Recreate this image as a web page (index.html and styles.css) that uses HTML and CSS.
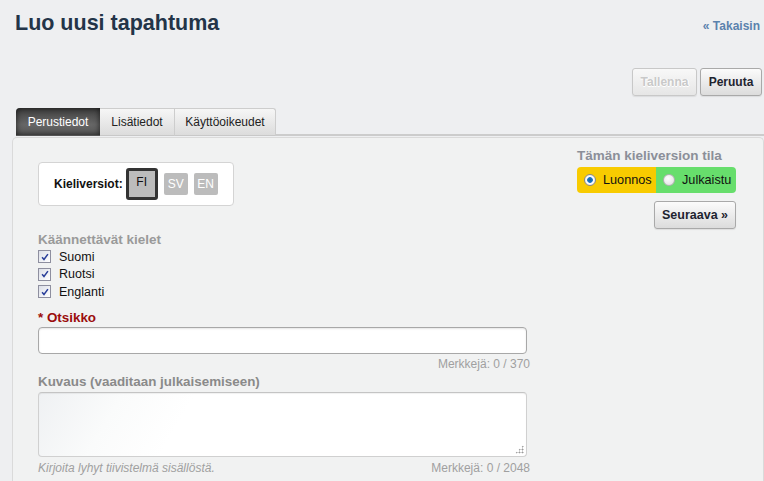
FILE: index.html
```html
<!DOCTYPE html>
<html lang="fi">
<head>
<meta charset="utf-8">
<title>Luo uusi tapahtuma</title>
<link rel="stylesheet" href="styles.css">
</head>
<body>
<header class="page-header">
  <h1 class="title">Luo uusi tapahtuma</h1>
  <a class="back-link" href="#">« Takaisin</a>
</header>
<div class="toolbar">
  <button class="btn btn-disabled" disabled>Tallenna</button>
  <button class="btn">Peruuta</button>
</div>
<nav class="tabs">
  <a class="tab tab-active" href="#">Perustiedot</a>
  <a class="tab" href="#">Lisätiedot</a>
  <a class="tab" href="#">Käyttöoikeudet</a>
  <span class="tab-fill"></span>
</nav>
<section class="panel">
  <div class="main-col">
    <div class="lang-box">
      <span class="lang-label">Kieliversiot:</span>
      <span class="lang lang-current">FI</span>
      <span class="lang">SV</span>
      <span class="lang">EN</span>
    </div>
    <h3 class="sub-heading">Käännettävät kielet</h3>
    <ul class="check-list">
      <li class="check-row"><span class="checkbox"><svg viewBox="0 0 12 12" width="10" height="10"><path d="M2.5 6.2 L4.8 9 L9.5 2.5" fill="none" stroke="#2a3f9a" stroke-width="1.8"/></svg></span>Suomi</li>
      <li class="check-row"><span class="checkbox"><svg viewBox="0 0 12 12" width="10" height="10"><path d="M2.5 6.2 L4.8 9 L9.5 2.5" fill="none" stroke="#2a3f9a" stroke-width="1.8"/></svg></span>Ruotsi</li>
      <li class="check-row"><span class="checkbox"><svg viewBox="0 0 12 12" width="10" height="10"><path d="M2.5 6.2 L4.8 9 L9.5 2.5" fill="none" stroke="#2a3f9a" stroke-width="1.8"/></svg></span>Englanti</li>
    </ul>
    <label class="field-label required">* Otsikko</label>
    <input class="text-input" type="text">
    <div class="counter">Merkkejä: 0 / 370</div>
    <label class="field-label muted">Kuvaus (vaaditaan julkaisemiseen)</label>
    <div class="area-wrap">
      <textarea class="text-area"></textarea>
      <span class="grip"></span>
    </div>
    <div class="hint-row">
      <span class="hint">Kirjoita lyhyt tiivistelmä sisällöstä.</span>
      <span class="counter-inline">Merkkejä: 0 / 2048</span>
    </div>
  </div>
  <aside class="side-col">
    <h3 class="side-heading">Tämän kieliversion tila</h3>
    <div class="status">
      <span class="status-opt status-draft"><span class="radio radio-on"></span>Luonnos</span>
      <span class="status-opt status-pub"><span class="radio"></span>Julkaistu</span>
    </div>
    <button class="btn btn-next">Seuraava »</button>
  </aside>
</section>
</body>
</html>
```
FILE: styles.css
```css
* { box-sizing: border-box; }
html, body { margin: 0; padding: 0; }
body {
  background: #eeeff1;
  font-family: "Liberation Sans", Arial, sans-serif;
  font-size: 12px;
  color: #222;
  width: 764px;
  height: 481px;
  overflow: hidden;
}
.page-header {
  display: flex;
  justify-content: space-between;
  align-items: flex-start;
  padding: 10px 4px 0 15px;
}
.title {
  margin: 0;
  font-size: 21.5px;
  line-height: 26px;
  font-weight: bold;
  color: #233448;
}
.back-link {
  margin-top: 9px;
  font-size: 12px;
  font-weight: bold;
  color: #5b82ad;
  text-decoration: none;
}
.toolbar {
  display: flex;
  justify-content: flex-end;
  gap: 3px;
  padding: 32px 2px 0 0;
}
.btn {
  height: 28px;
  padding: 0 7px;
  border: 1px solid #a9a9a9;
  border-radius: 3px;
  background: linear-gradient(#fbfbfb, #dcdcdc);
  font-family: "Liberation Sans", Arial, sans-serif;
  font-size: 12px;
  font-weight: bold;
  color: #1e2430;
  white-space: nowrap;
  box-shadow: 0 1px 1px rgba(0,0,0,0.08);
}
.btn-disabled {
  width: 65px;
  color: #c9c9c9;
  border-color: #c8c8c8;
  text-shadow: 0 1px 0 #fff, 1px 0 0 #fff;
  background: linear-gradient(#f8f8f8, #e6e6e6);
}
.toolbar .btn:last-child { width: 62px; }
.tabs {
  display: flex;
  margin: 12px 0 0 16px;
  height: 28px;
}
.tab {
  display: flex;
  align-items: center;
  height: 28px;
  padding: 0 10px;
  border: 1px solid #cdcdcd;
  border-left: none;
  background: linear-gradient(#f6f6f6, #dcdcdc);
  color: #222;
  text-decoration: none;
  font-size: 12px;
  border-bottom: 1px solid #c8c8c8;
}
.tab:nth-child(2) { width: 75px; justify-content: center; border-radius: 0; }
.tab:nth-child(3) { width: 101px; justify-content: center; border-radius: 0 3px 0 0; }
.tab-active {
  width: 84px;
  justify-content: center;
  border: none;
  border-radius: 4px 0 0 0;
  background: linear-gradient(#3f3f3f, #666 60%, #5a5a5a);
  box-shadow: inset 0 0 6px rgba(0,0,0,0.7);
  color: #fff;
  border-bottom: 1px solid #555;
}
.tab-fill {
  flex: 1;
  border-bottom: 2px solid #cccccc;
}
.panel {
  display: flex;
  margin: 1px 0 0 12px;
  height: 344px;
  background: #f1f2f2;
  border: 1px solid #dadada;
  border-bottom: none;
  border-radius: 5px 5px 0 0;
  padding: 0 26px 0 25px;
}
.main-col {
  width: 492px;
  display: flex;
  flex-direction: column;
  align-items: flex-start;
}
.lang-box {
  margin-top: 24px;
  width: 196px;
  height: 44px;
  display: flex;
  align-items: center;
  gap: 6px;
  padding: 0 0 0 15px;
  background: #fff;
  border: 1px solid #d4d4d4;
  border-radius: 4px;
}
.lang-label {
  font-weight: bold;
  font-size: 12px;
  color: #111;
  margin-right: -3px;
}
.lang {
  width: 24px;
  height: 22px;
  display: flex;
  align-items: center;
  justify-content: center;
  background: #bcbcbc;
  color: #fff;
  border-radius: 2px;
  font-size: 12px;
}
.lang-current {
  width: 32px;
  height: 32px;
  border: 3px solid #333;
  border-radius: 3px;
  color: #111;
  align-items: flex-start;
  padding-top: 4px;
}
.sub-heading {
  margin: 26px 0 0 0;
  font-size: 13.5px;
  line-height: 16px;
  font-weight: bold;
  color: #9a9a9a;
}
.check-list {
  list-style: none;
  margin: 0;
  padding: 0;
}
.check-row {
  display: flex;
  align-items: center;
  height: 17.5px;
  font-size: 12.5px;
  color: #111;
}
.checkbox {
  width: 13px;
  height: 13px;
  margin-right: 8px;
  border: 1px solid #8e8f9f;
  background: linear-gradient(135deg, #dcdfe8, #ffffff);
  display: flex;
  align-items: center;
  justify-content: center;
}
.field-label {
  display: block;
  font-size: 13.4px;
  line-height: 16px;
  font-weight: bold;
}
.required {
  margin-top: 9px;
  color: #9b0d0d;
}
.muted {
  margin-top: 3px;
  color: #8a8a8a;
}
.text-input {
  margin-top: 1px;
  width: 489px;
  height: 27px;
  border: 1px solid #a8a8a8;
  border-radius: 4px;
  background: #fff;
  box-shadow: inset 0 1px 2px rgba(0,0,0,0.1);
}
.counter {
  align-self: stretch;
  text-align: right;
  font-size: 12px;
  line-height: 14px;
  margin-top: 3px;
  color: #a0a0a0;
}
.area-wrap {
  position: relative;
  margin-top: 2px;
  width: 489px;
  height: 65px;
}
.text-area {
  display: block;
  width: 100%;
  height: 100%;
  resize: none;
  border: 1px solid #d0d0d0;
  border-top-color: #c4c4c4;
  border-radius: 4px;
  background: linear-gradient(120deg, #eff1f3 0, #fafbfb 16%, #ffffff 30%);
  box-shadow: inset 0 1px 1px rgba(0,0,0,0.06);
}
.grip {
  position: absolute;
  right: 3px;
  bottom: 3px;
  width: 9px;
  height: 9px;
  background:
    radial-gradient(circle, #999 0.9px, transparent 1.1px) 0 0 / 3px 3px;
  clip-path: polygon(100% 0, 100% 100%, 0 100%);
}
.hint-row {
  align-self: stretch;
  display: flex;
  justify-content: space-between;
  margin-top: 4px;
  font-size: 12px;
  line-height: 14px;
  color: #a0a0a0;
}
.hint { font-style: italic; }
.side-col {
  margin-left: 47px;
  width: 159px;
  display: flex;
  flex-direction: column;
  align-items: flex-end;
}
.side-heading {
  align-self: flex-start;
  margin: 10px 0 0 0;
  font-size: 13.5px;
  line-height: 16px;
  font-weight: bold;
  color: #8b8f99;
}
.status {
  margin-top: 3px;
  display: flex;
  width: 159px;
  height: 26px;
  border-radius: 4px;
  overflow: hidden;
}
.status-opt {
  display: flex;
  align-items: center;
  font-size: 12.7px;
  color: #111;
  white-space: nowrap;
}
.status-draft { width: 79px; background: #f8cb00; padding-left: 7px; }
.status-pub { flex: 1; background: #67de6c; padding-left: 7px; }
.radio {
  width: 12px;
  height: 12px;
  border-radius: 50%;
  margin-right: 7px;
  border: 1px solid #b0b0b0;
  background: radial-gradient(circle at 40% 35%, #fff, #dcdcdc);
}
.radio-on {
  border-color: #8a8a8a;
  background: radial-gradient(circle, #0b5fa8 0, #1c78c5 2.5px, #fff 3.2px, #e6e6e6 6px);
}
.btn-next {
  margin-top: 8px;
  width: 82px;
  padding: 0;
  font-size: 12.5px;
}
```
